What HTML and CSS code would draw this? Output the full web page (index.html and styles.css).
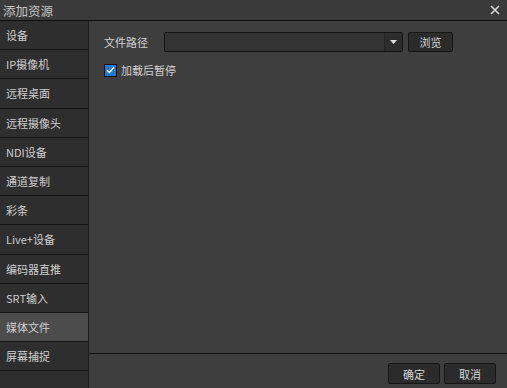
FILE: index.html
```html
<!DOCTYPE html>
<html lang="zh-CN">
<head>
  <meta charset="UTF-8">
  <title>添加资源</title>
  <link rel="stylesheet" href="styles.css">
</head>
<body>
  <div class="window">
    <div class="titlebar">
      <span class="title">添加资源</span>
      <span class="close">
        <svg width="10" height="10" viewBox="0 0 10 10"><path d="M1 1L9 9M9 1L1 9" stroke="#d8d8d8" stroke-width="1.6"/></svg>
      </span>
    </div>
    <div class="main">
      <div class="sidebar">
        <div class="item">设备</div>
        <div class="item">IP摄像机</div>
        <div class="item">远程桌面</div>
        <div class="item">远程摄像头</div>
        <div class="item">NDI设备</div>
        <div class="item">通道复制</div>
        <div class="item">彩条</div>
        <div class="item">Live+设备</div>
        <div class="item">编码器直推</div>
        <div class="item">SRT输入</div>
        <div class="item active">媒体文件</div>
        <div class="item">屏幕捕捉</div>
      </div>
      <div class="content">
        <div class="form">
          <div class="row">
            <span class="label">文件路径</span>
            <div class="combo">
              <div class="combo-text"></div>
              <div class="combo-arrow">
                <svg width="7" height="4" viewBox="0 0 7 4"><path d="M0 0H7L3.5 4Z" fill="#e0e0e0"/></svg>
              </div>
            </div>
            <button class="btn browse">浏览</button>
          </div>
          <label class="check">
            <span class="box">
              <svg width="9" height="8" viewBox="0 0 9 8"><path d="M1 4.2L3.4 6.5L8 1.2" fill="none" stroke="#fff" stroke-width="1.5"/></svg>
            </span>
            加载后暂停
          </label>
        </div>
        <div class="footer">
          <button class="btn">确定</button>
          <button class="btn">取消</button>
        </div>
      </div>
    </div>
  </div>
</body>
</html>
```

FILE: styles.css
```css
body {
  margin: 0;
  padding: 0;
  background-color: #3e3e3e;
  font-family: "Noto Sans CJK SC", "Liberation Sans", sans-serif;
  font-size: 11px;
  color: #d2d2d2;
}
.window {
  display: flex;
  flex-direction: column;
  width: 507px;
  height: 388px;
  overflow: hidden;
}
.titlebar {
  height: 20px;
  display: flex;
  align-items: center;
  justify-content: space-between;
  background-color: #3a3a3a;
  border-bottom: 1px solid #0e0e0e;
  flex-shrink: 0;
}
.title {
  padding-left: 3px;
  font-size: 12.5px;
  color: #c4c4c4;
}
.close {
  display: flex;
  padding-right: 7px;
}
.main {
  flex: 1;
  display: flex;
  min-height: 0;
}
.sidebar {
  width: 88px;
  background-color: #2e2e2e;
  border-right: 1px solid #1e1e1e;
  flex-shrink: 0;
}
.item {
  height: 28.2px;
  line-height: 28px;
  padding-left: 6px;
  border-bottom: 1px solid #141414;
  color: #cfcfcf;
  white-space: nowrap;
}
.item.active {
  background-color: #4c4c4c;
}
.content {
  flex: 1;
  display: flex;
  flex-direction: column;
  background-color: #3e3e3e;
}
.form {
  flex: 1;
  padding: 11px 0 0 15px;
}
.row {
  display: flex;
  align-items: center;
  height: 20px;
}
.label {
  width: 60px;
}
.combo {
  display: flex;
  width: 237px;
  height: 18px;
  border: 1px solid #141414;
  border-radius: 2px;
  background-color: #333333;
}
.combo-text {
  flex: 1;
}
.combo-arrow {
  width: 17px;
  display: flex;
  align-items: center;
  justify-content: center;
  border-left: 1px solid #262626;
  background-color: #2c2c2c;
}
.btn {
  height: 21px;
  width: 52px;
  padding: 0;
  border: 1px solid #161616;
  border-radius: 2px;
  background-color: #2b2b2b;
  color: #d6d6d6;
  font-family: inherit;
  font-size: 11px;
}
.browse {
  width: 45px;
  height: 20px;
  margin-left: 5px;
}
.check {
  display: flex;
  align-items: center;
  margin-top: 10px;
}
.box {
  width: 11px;
  height: 11px;
  margin-right: 4px;
  border: 1px solid #0c0c0c;
  background-color: #1f78d1;
  display: flex;
  align-items: center;
  justify-content: center;
}
.footer {
  height: 35px;
  flex-shrink: 0;
  display: flex;
  justify-content: flex-end;
  align-items: flex-start;
  gap: 4px;
  padding: 9px 11px 0 0;
  box-sizing: border-box;
  border-top: 1px solid #101010;
}
```
